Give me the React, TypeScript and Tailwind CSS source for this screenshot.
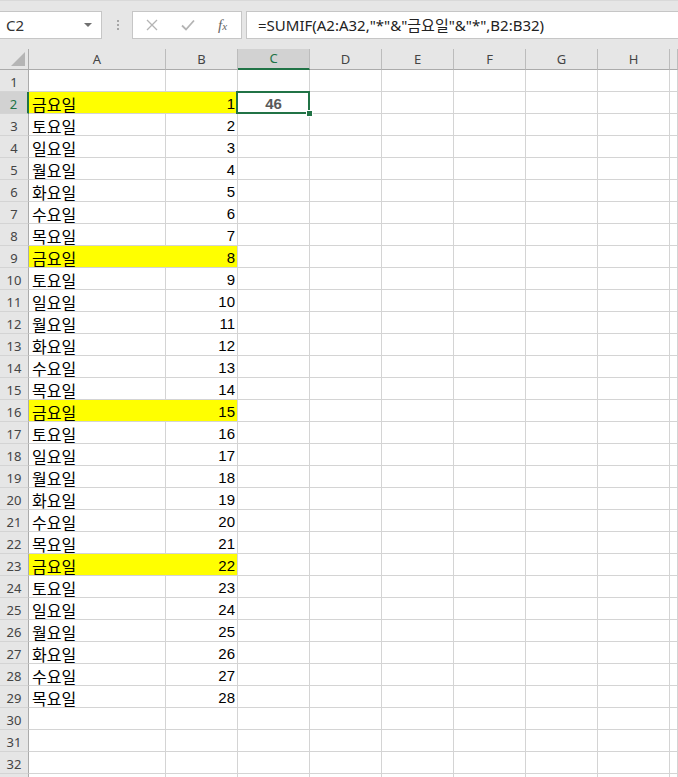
import React from 'react';

const DAYS = ['금요일', '토요일', '일요일', '월요일', '화요일', '수요일', '목요일'];
const COLS = ['A', 'B', 'C', 'D', 'E', 'F', 'G', 'H', ''];
const WIDTHS = ['w-[137px]', 'w-[72px]', 'w-[72px]', 'w-[72px]', 'w-[72px]', 'w-[72px]', 'w-[72px]', 'w-[72px]', 'flex-1'];

const uiFont = "font-['Noto_Sans','Noto_Sans_CJK_KR',sans-serif]";
const cellFont = "font-['Liberation_Sans','Noto_Sans_CJK_KR',sans-serif]";

function FormulaBar() {
  return (
    <div className="flex h-[49px] shrink-0 items-start border-t border-[#d9d9d9] bg-[#e6e6e6] pt-[10px]">
      {/* name box */}
      <div className="flex h-[28px] w-[102px] items-center justify-between border border-l-0 border-[#c6c6c6] bg-white pl-[6px] pr-[9px]">
        <span className={`${uiFont} text-[15px] text-[#333]`}>C2</span>
        <span className="h-0 w-0 border-x-[4px] border-t-[4px] border-x-transparent border-t-[#707070]" />
      </div>
      <div className="flex w-[30px] flex-col items-center justify-center gap-[2px] self-stretch pb-[10px] pl-[1px]">
        <span className="h-[2px] w-[2px] bg-[#a6a6a6]" />
        <span className="h-[2px] w-[2px] bg-[#a6a6a6]" />
        <span className="h-[2px] w-[2px] bg-[#a6a6a6]" />
      </div>
      {/* cancel / enter / fx */}
      <div className="flex h-[28px] w-[110px] items-center border border-[#c6c6c6] bg-white">
        <svg width="12" height="12" viewBox="0 0 12 12" className="ml-[13px]">
          <path d="M1 1 L11 11 M11 1 L1 11" stroke="#b4b4b4" strokeWidth="1.3" fill="none" />
        </svg>
        <svg width="14" height="12" viewBox="0 0 14 12" className="ml-[23px]">
          <path d="M1 6.5 L5 10.5 L13 1.5" stroke="#b4b4b4" strokeWidth="1.8" fill="none" />
        </svg>
        <span className="ml-[23px] font-['Liberation_Serif',serif] text-[15px] italic leading-none text-[#666]">
          f<span className="text-[11px]">x</span>
        </span>
      </div>
      <div className="ml-[4px] flex h-[28px] flex-1 items-center border border-r-0 border-[#c6c6c6] bg-white pl-[11px]">
        <span className={`${uiFont} whitespace-nowrap text-[15px] text-[#222]`}>
          =SUMIF(A2:A32,"*"&"금요일"&"*",B2:B32)
        </span>
      </div>
    </div>
  );
}

function HeaderRow() {
  return (
    <div className="flex h-[21px] shrink-0 bg-[#e6e6e6]">
      <div className="relative w-[29px] shrink-0 border-r border-b border-[#ababab]">
        <span className="absolute bottom-[3px] right-[3px] h-0 w-0 border-b-[14px] border-l-[14px] border-b-[#b5b5b5] border-l-transparent" />
      </div>
      {COLS.map((c, i) => {
        const sel = c === 'C';
        return (
          <div
            key={i}
            className={`${WIDTHS[i]} shrink-0 flex items-center justify-center border-r border-[#bcbcbc] pt-[1px] ${uiFont} text-[13px] ${
              sel ? 'bg-[#d2d2d2] text-[#217346] border-b-2 border-b-[#217346]' : 'border-b border-b-[#ababab] text-[#444]'
            }`}
          >
            {c}
          </div>
        );
      })}
    </div>
  );
}

function Row({ n }: { n: number }) {
  const hasData = n >= 2 && n <= 29;
  const day = hasData ? DAYS[(n - 2) % 7] : '';
  const num = hasData ? n - 1 : null;
  const yellow = hasData && day === '금요일';
  const selRow = n === 2;

  return (
    <div className="flex h-[22px] shrink-0">
      <div
        className={`w-[29px] shrink-0 flex items-center justify-center border-b border-[#d4d4d4] pt-[4px] ${uiFont} text-[13px] ${
          selRow ? 'bg-[#d2d2d2] text-[#217346] border-r-2 border-r-[#217346]' : 'bg-[#e6e6e6] text-[#444] border-r border-r-[#ababab]'
        }`}
      >
        {n <= 32 ? n : ''}
      </div>
      {/* A */}
      <div
        className={`w-[137px] shrink-0 flex items-center border-b pl-[3px] pt-[3px] text-[16px] text-black font-['Noto_Sans_CJK_KR',sans-serif] ${
          yellow ? 'bg-[#ffff00] border-b-[#d4d4d4]' : 'border-r border-[#d4d4d4]'
        }`}
      >
        {day}
      </div>
      {/* B */}
      <div
        className={`w-[72px] shrink-0 flex items-center justify-end border-r border-b border-[#d4d4d4] pr-[2px] pt-[3px] ${cellFont} text-[15px] text-black ${
          yellow ? 'bg-[#ffff00]' : ''
        }`}
      >
        {num}
      </div>
      {/* C */}
      <div className="relative w-[72px] shrink-0 flex items-center justify-center border-r border-b border-[#d4d4d4] pt-[3px]">
        {selRow && (
          <>
            <span className={`${cellFont} text-[15px] font-bold text-[#595959]`}>46</span>
            <div className="absolute -top-[1px] -left-[2px] -right-[1px] -bottom-[1px] z-10 border-2 border-[#217346]" />
            <div className="absolute -right-[4px] -bottom-[4px] z-20 h-[7px] w-[7px] border border-white bg-[#217346]" />
          </>
        )}
      </div>
      {WIDTHS.slice(3).map((w, i) => (
        <div key={i} className={`${w} shrink-0 border-r border-b border-[#d4d4d4]`} />
      ))}
    </div>
  );
}

export default function App() {
  const rows = Array.from({ length: 33 }, (_, i) => i + 1);
  return (
    <div className="flex h-[777px] w-[678px] flex-col overflow-hidden bg-white">
      <FormulaBar />
      <HeaderRow />
      <div className="flex flex-col">
        {rows.map(n => (
          <Row key={n} n={n} />
        ))}
      </div>
    </div>
  );
}
